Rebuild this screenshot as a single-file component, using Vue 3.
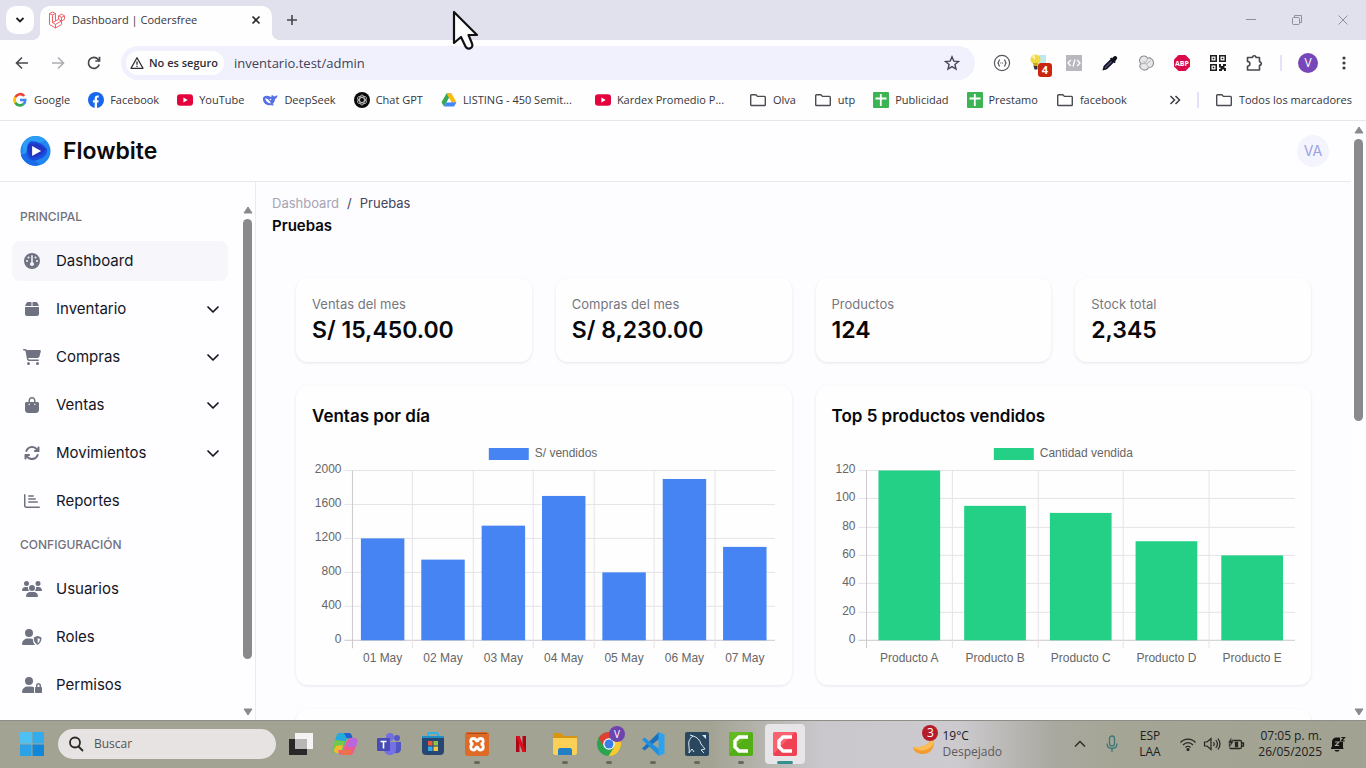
<script setup>
import { computed } from 'vue'

const bookmarks = [
  { name: 'Google', icon: 'google' },
  { name: 'Facebook', icon: 'facebook' },
  { name: 'YouTube', icon: 'youtube' },
  { name: 'DeepSeek', icon: 'deepseek' },
  { name: 'Chat GPT', icon: 'chatgpt' },
  { name: 'LISTING - 450 Semit...', icon: 'drive', long: true },
  { name: 'Kardex Promedio P...', icon: 'youtube', long: true },
  { name: 'Olva', icon: 'folder' },
  { name: 'utp', icon: 'folder' },
  { name: 'Publicidad', icon: 'sheets' },
  { name: 'Prestamo', icon: 'sheets' },
  { name: 'facebook', icon: 'folder' },
]

const icons = {
  gauge: { w: 512, d: 'M0 256a256 256 0 1 1 512 0A256 256 0 1 1 0 256zm320 96c0-26.9-16.5-49.9-40-59.3V88c0-13.3-10.7-24-24-24s-24 10.7-24 24V292.7c-23.5 9.5-40 32.5-40 59.3c0 35.3 28.7 64 64 64s64-28.7 64-64zM144 176a32 32 0 1 0 0-64 32 32 0 1 0 0 64zm-16 80a32 32 0 1 0 -64 0 32 32 0 1 0 64 0zm288 32a32 32 0 1 0 0-64 32 32 0 1 0 0 64zM400 144a32 32 0 1 0 -64 0 32 32 0 1 0 64 0z' },
  box: { w: 448, d: 'M50.7 58.5L0 160H208V32H93.7C75.5 32 58.9 42.3 50.7 58.5zM240 160H448L397.3 58.5C389.1 42.3 372.5 32 354.3 32H240V160zm208 32H0V416c0 35.3 28.7 64 64 64H384c35.3 0 64-28.7 64-64V192z' },
  cart: { w: 576, d: 'M0 24C0 10.7 10.7 0 24 0H69.5c22 0 41.5 12.8 50.6 32h411c26.3 0 45.5 25 38.6 50.4l-41 152.3c-8.5 31.4-37 53.3-69.5 53.3H170.7l5.4 28.5c2.2 11.3 12.1 19.5 23.6 19.5H488c13.3 0 24 10.7 24 24s-10.7 24-24 24H199.7c-34.6 0-64.3-24.6-70.7-58.5L77.4 54.5c-.7-3.8-4-6.5-7.9-6.5H24C10.7 48 0 37.3 0 24zM128 464a48 48 0 1 1 96 0 48 48 0 1 1 -96 0zm336-48a48 48 0 1 1 0 96 48 48 0 1 1 0-96z' },
  bag: { w: 448, d: 'M160 112c0-35.3 28.7-64 64-64s64 28.7 64 64v48H160V112zm-48 48H48c-26.5 0-48 21.5-48 48V416c0 53 43 96 96 96H352c53 0 96-43 96-96V208c0-26.5-21.5-48-48-48H336V112C336 50.1 285.9 0 224 0S112 50.1 112 112v48zm24 48a24 24 0 1 1 0 48 24 24 0 1 1 0-48zm152 24a24 24 0 1 1 48 0 24 24 0 1 1 -48 0z' },
  rotate: { w: 512, d: 'M105.1 202.6c7.7-21.8 20.2-42.3 37.8-59.8c62.5-62.5 163.8-62.5 226.3 0L386.3 160H352c-17.7 0-32 14.3-32 32s14.3 32 32 32H463.9c17.7 0 32-14.3 32-32V80c0-17.7-14.3-32-32-32s-32 14.3-32 32v35.2L414.4 97.6c-87.5-87.5-229.3-87.5-316.8 0C73.2 122 55.6 150.7 44.8 181.4c-5.9 16.7 2.9 34.9 19.5 40.8s34.9-2.9 40.8-19.5zM39 289.3c-5 1.5-9.8 4.2-13.7 8.2c-4 4-6.7 8.8-8.1 14c-.3 1.2-.6 2.5-.8 3.8c-.3 1.7-.4 3.4-.4 5.1V432c0 17.7 14.3 32 32 32s32-14.3 32-32V396.9l17.6 17.5c87.5 87.4 229.3 87.4 316.7 0c24.4-24.4 42.1-53.1 52.9-83.7c5.9-16.7-2.9-34.9-19.5-40.8s-34.9 2.9-40.8 19.5c-7.7 21.8-20.2 42.3-37.8 59.8c-62.5 62.5-163.8 62.5-226.3 0L125.6 352H160c17.7 0 32-14.3 32-32s-14.3-32-32-32H48.4c-1.6 0-3.2 .1-4.8 .3s-3.1 .5-4.6 1z' },
  chart: { w: 512, d: 'M24 32c13.300 0 24 10.700 24 24V408c0 13.300 10.700 24 24 24H488c13.300 0 24 10.700 24 24s-10.700 24-24 24H72c-39.800 0-72-32.200-72-72V56C0 42.700 10.700 32 24 32zM152 72H296a24 24 0 0 1 0 48H152a24 24 0 0 1 0-48zM152 168H360a24 24 0 0 1 0 48H152a24 24 0 0 1 0-48zM152 264H424a24 24 0 0 1 0 48H152a24 24 0 0 1 0-48z' },
  users: { w: 640, d: 'M144 0a80 80 0 1 1 0 160A80 80 0 1 1 144 0zM512 0a80 80 0 1 1 0 160A80 80 0 1 1 512 0zM0 298.700C0 239.800 47.800 192 106.700 192h42.700c15.900 0 31 3.500 44.600 9.700c-1.300 7.200-1.900 14.700-1.900 22.300c0 38.200 16.800 72.500 43.300 96H21.300C9.600 320 0 310.400 0 298.700zM405.300 320c26.600-23.500 43.300-57.800 43.300-96c0-7.600-.7-15-1.900-22.300c13.600-6.300 28.700-9.700 44.600-9.700h42.700C592.200 192 640 239.800 640 298.700c0 11.800-9.600 21.300-21.300 21.300H405.300zM224 224a96 96 0 1 1 192 0 96 96 0 1 1-192 0zM128 485.300C128 411.700 187.700 352 261.300 352H378.700C452.300 352 512 411.700 512 485.300c0 14.700-11.900 26.700-26.700 26.700H154.700c-14.700 0-26.700-11.900-26.700-26.700z' },
  shield: { w: 640, d: 'M224 256A128 128 0 1 0 224 0a128 128 0 1 0 0 256zM178.300 304C79.800 304 0 383.800 0 482.300C0 498.700 13.300 512 29.700 512H418C384 480 352 430 352 345l0-18c-24-15-52-23-82-23H178.300zM509 226c-6-3-13-3-19 0L392 265c-9 3-15 12-15 22c0 79 28 167 113 214c6 4 13 4 19 0c85-47 114-135 114-214c0-10-6-19-15-22L509 226zm-9 60l75 30c-4 60-28 105-75 137V286z' },
  lock: { w: 640, d: 'M224 256A128 128 0 1 0 224 0a128 128 0 1 0 0 256zM178.300 304C79.800 304 0 383.800 0 482.300C0 498.700 13.300 512 29.700 512H392c-5-10-8-20-8-32V352c0-8 1-16 4-23c-31-16-67-25-104-25H178.300zM528 240c17.700 0 32 14.300 32 32v48H496V272c0-17.700 14.300-32 32-32zm-80 32v48c-17.700 0-32 14.300-32 32V480c0 17.700 14.300 32 32 32H608c17.700 0 32-14.300 32-32V352c0-17.700-14.300-32-32-32V272c0-44.200-35.800-80-80-80s-80 35.800-80 80z' },
}

const mainMenu = [
  { name: 'Dashboard', icon: 'gauge', active: true },
  { name: 'Inventario', icon: 'box', group: true },
  { name: 'Compras', icon: 'cart', group: true },
  { name: 'Ventas', icon: 'bag', group: true },
  { name: 'Movimientos', icon: 'rotate', group: true },
  { name: 'Reportes', icon: 'chart' },
]
const configMenu = [
  { name: 'Usuarios', icon: 'users' },
  { name: 'Roles', icon: 'shield' },
  { name: 'Permisos', icon: 'lock' },
]
const sections = [
  { title: 'PRINCIPAL', items: mainMenu },
  { title: 'CONFIGURACIÓN', items: configMenu },
]

const stats = [
  { label: 'Ventas del mes', value: 'S/ 15,450.00' },
  { label: 'Compras del mes', value: 'S/ 8,230.00' },
  { label: 'Productos', value: '124' },
  { label: 'Stock total', value: '2,345' },
]

function buildChart(c) {
  const top = 24.5
  const bottom = 194.5
  const right = 463.5
  const slot = (right - c.left) / c.data.length
  const barW = slot * 0.72
  const y = (v) => bottom - ((bottom - top) * v) / c.max
  const ticks = []
  for (let v = 0; v <= c.max; v += c.step) ticks.push({ v, y: Math.floor(y(v)) + 0.5 })
  const bars = c.data.map(([label, v], i) => ({
    label,
    edge: Math.floor(c.left + slot * i) + 0.5,
    cx: c.left + slot * (i + 0.5),
    x: c.left + slot * (i + 0.5) - barW / 2,
    w: barW,
    y: y(v),
    h: bottom - y(v),
  }))
  return { ...c, top, bottom, right, ticks, bars }
}

const charts = computed(() => [
  buildChart({
    title: 'Ventas por día', legend: 'S/ vendidos', color: '#4684f3', max: 2000, step: 400, left: 40.5, legendX: 177,
    data: [['01 May', 1200], ['02 May', 950], ['03 May', 1350], ['04 May', 1700], ['05 May', 800], ['06 May', 1900], ['07 May', 1100]],
  }),
  buildChart({
    title: 'Top 5 productos vendidos', legend: 'Cantidad vendida', color: '#23d085', max: 120, step: 20, left: 34.5, legendX: 162,
    data: [['Producto A', 120], ['Producto B', 95], ['Producto C', 90], ['Producto D', 70], ['Producto E', 60]],
  }),
])

const apps = [
  { id: 'taskview', name: 'Vista de tareas' },
  { id: 'copilot', name: 'Copilot' },
  { id: 'teams', name: 'Teams' },
  { id: 'store', name: 'Store' },
  { id: 'xampp', name: 'XAMPP', open: true },
  { id: 'netflix', name: 'Netflix' },
  { id: 'files', name: 'Explorador', open: true },
  { id: 'chrome', name: 'Chrome', open: true },
  { id: 'code', name: 'VS Code', open: true },
  { id: 'mysql', name: 'Workbench', open: true },
  { id: 'camtasia', name: 'Camtasia', open: true },
  { id: 'recorder', name: 'Grabadora', open: true, active: true },
]
</script>

<template>
  <div class="desktop">
    <header class="tabstrip">
      <button class="tab-search" aria-label="Buscar pestañas">
        <svg width="12" height="12" viewBox="0 0 12 12"><path d="M2.500 4l3.500 3.500L9.500 4" fill="none" stroke="#1f1f24" stroke-width="1.800" /></svg>
      </button>
      <div class="tab">
        <svg width="18" height="18" viewBox="0 0 18 18" fill="none" stroke="#f0626a" stroke-width="1" stroke-linejoin="round">
          <path d="M1.500 2.500l3-1.500 3 1.500v7.500l3-1.700V4.800l3-1.600 3 1.600v3.500l-3 1.700v3.500l-6 3.500-6-3.500z" />
          <path d="M1.500 2.500l3 1.600 3-1.600M4.500 4.100v7.500l3-1.600M4.500 11.600l3 1.800 6-3.400-3-1.700M7.500 13.400V17M10.500 4.800l3 1.600 3-1.600M13.500 6.400V10" />
        </svg>
        <span class="tab-title">Dashboard | Codersfree</span>
        <button class="tab-close" aria-label="Cerrar pestaña">
          <svg width="10" height="10" viewBox="0 0 10 10"><path d="M1.500 1.500l7 7M8.500 1.500l-7 7" stroke="#27272c" stroke-width="1.600" /></svg>
        </button>
      </div>
      <button class="tab-new" aria-label="Nueva pestaña">
        <svg width="12" height="12" viewBox="0 0 12 12"><path d="M6 1v10M1 6h10" stroke="#45454c" stroke-width="1.600" /></svg>
      </button>
      <div class="window-buttons">
        <button aria-label="Minimizar"><svg width="12" height="12" viewBox="0 0 12 12"><path d="M1 5.500h10" stroke="#8f909b" /></svg></button>
        <button aria-label="Restaurar"><svg width="12" height="12" viewBox="0 0 12 12" fill="none" stroke="#8f909b"><rect x="1.500" y="3.500" width="7" height="7" rx="1" /><path d="M3.500 3.500v-2h7v7h-2" /></svg></button>
        <button aria-label="Cerrar"><svg width="12" height="12" viewBox="0 0 12 12"><path d="M1.500 1.500l9 9M10.500 1.500l-9 9" stroke="#8f909b" /></svg></button>
      </div>
    </header>

    <div class="toolbar">
      <button class="tool" aria-label="Atrás"><svg width="16" height="16" viewBox="0 0 16 16" fill="none" stroke="#47474d" stroke-width="1.600"><path d="M14 8H3M8 2.500L2.500 8 8 13.500" /></svg></button>
      <button class="tool" aria-label="Adelante"><svg width="16" height="16" viewBox="0 0 16 16" fill="none" stroke="#adadb3" stroke-width="1.600"><path d="M2 8h11M8 2.500L13.500 8 8 13.500" /></svg></button>
      <button class="tool" aria-label="Recargar"><svg width="16" height="16" viewBox="0 0 16 16" fill="none" stroke="#47474d" stroke-width="1.700"><path d="M13.200 9.500A5.500 5.500 0 1 1 12 4.200L13.500 6" /><path d="M13.500 1.800V6H9.300" /></svg></button>
      <div class="omnibox">
        <button class="chip">
          <svg width="14" height="14" viewBox="0 0 14 14" fill="none" stroke="#2d2d33" stroke-width="1.300"><path d="M7 1.800L13 12.300H1z" stroke-linejoin="round" /><path d="M7 5.500v3.300M7 9.800v1.200" /></svg>
          No es seguro
        </button>
        <input class="url" aria-label="Dirección" value="inventario.test/admin" />
        <button class="star" aria-label="Añadir a marcadores"><svg width="16" height="16" viewBox="0 0 16 16"><path d="M8 1.800l1.800 4.300 4.700.4-3.600 3 1.100 4.600L8 11.600l-4 2.500 1.100-4.600-3.600-3 4.700-.4z" fill="none" stroke="#45465a" stroke-width="1.400" /></svg></button>
      </div>
      <button class="tool" aria-label="JSON"><svg width="18" height="18" viewBox="0 0 18 18" fill="none" stroke="#58585e" stroke-width="1.200"><circle cx="9" cy="9" r="7.600" /><path d="M7 5.800c-1.800 0-.8 2.400-2 3.200 1.200.8.200 3.200 2 3.200M11 5.800c1.800 0 .8 2.400 2 3.200-1.200.8-.2 3.200-2 3.200" /><path d="M7.200 9h3.800" stroke-dasharray="1 .8" /></svg></button>
      <button class="tool bulb" aria-label="Wappalyzer">
        <svg width="18" height="18" viewBox="0 0 18 18"><path d="M10 1h7v8h-7z" fill="#bfe8ee" /><circle cx="6.500" cy="5.500" r="5" fill="#f1d943" /><path d="M3 3a4 4 0 0 1 3-2v5z" fill="#fff59c" /><path d="M4 9h5l-.5 3h-4z" fill="#c6a51c" /><path d="M4.500 12h4v3.500h-3z" fill="#2f333c" /></svg>
        <span class="badge">4</span>
      </button>
      <button class="tool" aria-label="Código"><svg width="16" height="16" viewBox="0 0 16 16"><rect width="16" height="16" fill="#b9b8c1" /><path d="M4.800 5L2 8l2.800 3M11.200 5L14 8l-2.800 3M9 4.500l-2 7" fill="none" stroke="#fff" stroke-width="1.300" /></svg></button>
      <button class="tool" aria-label="Cuentagotas"><svg width="16" height="16" viewBox="0 0 16 16"><path d="M1.500 14.500l.8-3L9 4.800 11.200 7 4.500 13.700z" fill="#46477f" stroke="#101018" stroke-width="1.500" /><path d="M8 3.500l1.200-1 1 .8C11 2 12.500.5 14 1.200c2 1.200 1.200 3-.9 4.800l.6 1-1.200 1.200z" fill="#101018" /></svg></button>
      <button class="tool" aria-label="Filtro"><svg width="16" height="16" viewBox="0 0 16 16" stroke-linejoin="round"><path d="M2 3.500C3 .500 8 0 9.500 3c3-.8 6 1.500 6 4.800 0 3.500-2.800 5-5 4.700-1 3-5.500 3.500-7.500 1C1.200 11.500 2 9.500 3 8.500 1.500 7.500 1.200 5.500 2 3.500z" fill="#e7e7e9" stroke="#929297" stroke-width="1.100" /><path d="M3 8.500c2 .8 5.500 0 6.500-5.500M3 8.500c3-1 6.500.5 7.500 4M5.500 6l3 3 4-3.500" fill="none" stroke="#b5b5b9" /></svg></button>
      <button class="tool" aria-label="AdBlock Plus"><svg width="18" height="18" viewBox="0 0 18 18"><path d="M5.500 1h7L17 5.500v7L12.500 17h-7L1 12.500v-7z" fill="#d90b4b" /><text x="9" y="11.700" font-size="7" font-weight="700" text-anchor="middle" fill="#fff">ABP</text></svg></button>
      <button class="tool" aria-label="Código QR"><svg width="16" height="16" viewBox="0 0 16 16" fill="#1d1d1f"><path fill-rule="evenodd" d="M0 0h7v7H0zM1.500 1.500v4h4v-4zM9 0h7v7H9zM10.500 1.500v4h4v-4zM0 9h7v7H0zM1.500 10.500v4h4v-4z" /><path d="M2.700 2.700h1.600v1.600H2.700zM11.700 2.700h1.600v1.600h-1.600zM2.700 11.700h1.600v1.600H2.700zM9 9h2v2h2V9h3v2h-1.500v2H16v3h-2v-1.500h-2V16H9v-2h1.500v-1.500H9z" /></svg></button>
      <button class="tool" aria-label="Extensiones"><svg width="18" height="18" viewBox="0 0 18 18" fill="none" stroke="#47474d" stroke-width="1.600" stroke-linejoin="round"><path d="M2.500 3.500h5c0-2.300 3.500-2.300 3.500 0h3.500v4.200c2.300 0 2.300 3.700 0 3.700V16h-12v-3.800c3.200 0 3.200-4.700 0-4.700z" /></svg></button>
      <i class="divider"></i>
      <button class="tool" aria-label="Perfil"><span class="profile">V</span></button>
      <button class="tool" aria-label="Menú"><svg width="16" height="16" viewBox="0 0 16 16" fill="#3c3c42"><circle cx="8" cy="3" r="1.600" /><circle cx="8" cy="8" r="1.600" /><circle cx="8" cy="13" r="1.600" /></svg></button>
    </div>

    <nav class="bookmarks" aria-label="Marcadores">
      <a v-for="b in bookmarks" :key="b.name" href="#" class="bookmark" :class="{ long: b.long }">
        <svg v-if="b.icon === 'google'" width="16" height="16" viewBox="0 0 16 16" fill="none" stroke-width="2.600"><path d="M12.200 4A5.400 5.400 0 0 0 3.300 5.200" stroke="#ea4335" /><path d="M3.300 5.200a5.400 5.400 0 0 0 0 5.600" stroke="#fbbc05" /><path d="M3.300 10.800A5.400 5.400 0 0 0 11.500 12" stroke="#34a853" /><path d="M11.500 12A5 5 0 0 0 13.200 8H8" stroke="#4285f4" /></svg>
        <svg v-else-if="b.icon === 'facebook'" width="16" height="16" viewBox="0 0 16 16"><circle cx="8" cy="8" r="8" fill="#1768ee" /><path d="M6.700 16v-5.400H4.900V8.200h1.800V6.700c0-2.500 1.500-3.500 4-3.100v2c-1.300-.1-1.700.3-1.700 1.200v1.400h1.700l-.4 2.400H9V16z" fill="#fff" /></svg>
        <svg v-else-if="b.icon === 'youtube'" width="16" height="16" viewBox="0 0 16 16"><rect y="2.300" width="16" height="11.400" rx="3" fill="#e4043d" /><path d="M6.400 5.600L10.700 8l-4.300 2.400z" fill="#fff" /></svg>
        <svg v-else-if="b.icon === 'deepseek'" width="16" height="16" viewBox="0 0 16 16"><path d="M1 6c1-2.500 4-3 7-1.500C9 5.500 10 5 9.500 3c1.500.300 2 1.500 3 1.500.800-.300 1.500-1 3-1-.3 2-1 3-2.500 3.500-.2 2.500-1 4-2.500 5l1.500 1c-1.500.800-2.500.5-3.500 0C4 14 .500 10.500 1 6z" fill="#5570e6" /><path d="M3 6.500c2-.5 4 1 6 5-3-.2-5-2-6-5z" fill="#fff" /><circle cx="8.500" cy="7.500" r=".8" fill="#fff" /></svg>
        <svg v-else-if="b.icon === 'chatgpt'" width="16" height="16" viewBox="0 0 16 16" fill="none" stroke="#d8d8d8" stroke-width=".8"><circle cx="8" cy="8" r="8" fill="#09090a" stroke="none" /><ellipse cx="8" cy="8" rx="2.400" ry="5" /><ellipse cx="8" cy="8" rx="2.400" ry="5" transform="rotate(60 8 8)" /><ellipse cx="8" cy="8" rx="2.400" ry="5" transform="rotate(120 8 8)" /></svg>
        <svg v-else-if="b.icon === 'drive'" width="16" height="16" viewBox="0 0 16 16"><path d="M5.500 1.500h5L8 6l-5 8.500L.5 10.300z" fill="#35a853" /><path d="M5.500 1.500h5l5 8.800h-5z" fill="#fbbb0d" /><path d="M5.500 10.300h10L13 14.500H3z" fill="#4386f5" /><path d="M8 6.500l2.200 3.800H5.800z" fill="#fff" /></svg>
        <svg v-else-if="b.icon === 'sheets'" width="16" height="16" viewBox="0 0 16 16"><rect width="16" height="16" rx="1" fill="#3cb454" /><path d="M7.800 2v12M2.500 6.500h11" stroke="#fff" stroke-width="1.800" /></svg>
        <svg v-else width="18" height="16" viewBox="0 0 18 16"><path d="M1.700 3.500c0-.5.300-.8.800-.8h4.300l1.700 1.700h7c.500 0 .8.300.8.800v7.500c0 .5-.3.800-.8.800h-13c-.5 0-.8-.3-.8-.8z" fill="none" stroke="#4b4b52" stroke-width="1.400" /></svg>
        <span>{{ b.name }}</span>
      </a>
      <button class="more" aria-label="Más marcadores"><svg width="12" height="12" viewBox="0 0 12 12"><path d="M1.500 2L5.500 6l-4 4M6.500 2l4 4-4 4" fill="none" stroke="#3c3c42" stroke-width="1.500" /></svg></button>
      <i class="divider wide"></i>
      <a href="#" class="bookmark">
        <svg width="18" height="16" viewBox="0 0 18 16"><path d="M1.700 3.500c0-.5.300-.8.800-.8h4.300l1.700 1.700h7c.500 0 .8.300.8.800v7.500c0 .5-.3.800-.8.800h-13c-.5 0-.8-.3-.8-.8z" fill="none" stroke="#4b4b52" stroke-width="1.400" /></svg>
        <span>Todos los marcadores</span>
      </a>
    </nav>

    <div class="viewport">
      <div class="page">
        <header class="topbar">
          <a href="#" class="brand">
            <svg width="31" height="32" viewBox="0 0 32 32">
              <circle cx="16" cy="16" r="15.500" fill="#2087f2" />
              <path d="M3 8A15.500 15.500 0 0 1 27 5l-8 3-9 3-7 9z" fill="#2b9df6" />
              <path d="M1 20c3 9 12 13 20 10l-8-5-5-7z" fill="#1a6bea" />
              <path d="M11 6c5-1 13 2 17 8 1 6-5 10-12 12-5 0-9-3-9-8 0-5 0-9 4-12z" fill="#1b4ddd" />
              <path d="M9 9c7-2 13 0 17 5-1 5-7 8-14 9-3-3-5-8-3-14z" fill="#2136c5" />
              <path d="M12.500 10.800L21.800 16l-9.300 5.200z" fill="#fff" />
            </svg>
            <span>Flowbite</span>
          </a>
          <button class="avatar" aria-label="Cuenta">VA</button>
        </header>
        <div class="body">
          <aside class="sidebar">
            <nav class="menu" aria-label="Principal">
              <template v-for="s in sections" :key="s.title">
                <h2 class="section">{{ s.title }}</h2>
                <component :is="item.group ? 'button' : 'a'" v-for="item in s.items" :key="item.name" :href="item.group ? undefined : '#'" class="item" :class="{ active: item.active }">
                  <span class="item-icon"><svg height="16" :viewBox="`0 0 ${icons[item.icon].w} 512`"><path :d="icons[item.icon].d" fill="#6f7280" fill-rule="evenodd" /></svg></span>
                  <span class="item-name">{{ item.name }}</span>
                  <svg v-if="item.group" width="14" height="14" viewBox="0 0 14 14"><path d="M2 5l5 5 5-5" fill="none" stroke="#14161f" stroke-width="1.700" stroke-linecap="round" stroke-linejoin="round" /></svg>
                </component>
              </template>
            </nav>
            <div class="scrollbar">
              <svg width="10" height="8" viewBox="0 0 10 8"><path d="M5 1l4 6H1z" fill="#8a898c" stroke="#8a898c" stroke-linejoin="round" /></svg>
              <div class="track"><div class="thumb side"></div></div>
              <svg width="10" height="8" viewBox="0 0 10 8"><path d="M1 1h8L5 7z" fill="#8a898c" stroke="#8a898c" stroke-linejoin="round" /></svg>
            </div>
          </aside>
          <main class="main">
            <nav class="crumbs" aria-label="Ruta"><a href="#">Dashboard</a><span>/</span><span class="current">Pruebas</span></nav>
            <h1>Pruebas</h1>
            <div class="content">
              <section class="stats">
                <article v-for="s in stats" :key="s.label" class="card">
                  <p class="label">{{ s.label }}</p>
                  <p class="value">{{ s.value }}</p>
                </article>
              </section>
              <section class="charts">
                <article v-for="c in charts" :key="c.title" class="card">
                  <h2 class="chart-title">{{ c.title }}</h2>
                  <svg class="chart" viewBox="0 0 464 223" role="img" :aria-label="c.title">
                    <rect :x="c.legendX" y="2" width="40" height="12" :fill="c.color" />
                    <text :x="c.legendX + 46" y="11">{{ c.legend }}</text>
                    <g v-for="t in c.ticks" :key="t.v">
                      <line :x1="c.left - 8" :x2="c.right" :y1="t.y" :y2="t.y" :class="{ axis: t.v === 0 }" />
                      <text :x="c.left - 11" :y="t.y + 2.5" text-anchor="end">{{ t.v }}</text>
                    </g>
                    <line v-for="(b, i) in c.bars" :key="'g' + b.label" :x1="b.edge" :x2="b.edge" :y1="c.top" :y2="c.bottom + 8" :class="{ axis: i === 0 }" />
                    <g v-for="b in c.bars" :key="b.label">
                      <rect :x="b.x" :y="b.y" :width="b.w" :height="b.h" :fill="c.color" />
                      <text :x="b.cx" y="216" text-anchor="middle">{{ b.label }}</text>
                    </g>
                  </svg>
                </article>
              </section>
              <section class="card next"></section>
            </div>
          </main>
        </div>
      </div>
      <div class="scrollbar">
        <svg width="10" height="8" viewBox="0 0 10 8"><path d="M5 1l4 6H1z" fill="#8a898c" stroke="#8a898c" stroke-linejoin="round" /></svg>
        <div class="track"><div class="thumb page-thumb"></div></div>
        <svg width="10" height="8" viewBox="0 0 10 8"><path d="M1 1h8L5 7z" fill="#8a898c" stroke="#8a898c" stroke-linejoin="round" /></svg>
      </div>
    </div>

    <footer class="taskbar">
      <button class="start" aria-label="Inicio">
        <svg width="24" height="24" viewBox="0 0 24 24"><path d="M0 0h11.500v11.500H0z" fill="#4cc1f2" /><path d="M12.500 0H24v11.500H12.500z" fill="#33aceb" /><path d="M0 12.500h11.500V24H0z" fill="#2ba2e6" /><path d="M12.500 12.500H24V24H12.500z" fill="#1286d8" /></svg>
      </button>
      <label class="search">
        <svg width="16" height="16" viewBox="0 0 16 16" fill="none" stroke="#29292b" stroke-width="1.800"><circle cx="7" cy="6.500" r="5" /><path d="M10.500 10.500L15 15" /></svg>
        <input type="search" placeholder="Buscar" aria-label="Buscar" />
      </label>
      <div class="apps">
        <button v-for="a in apps" :key="a.id" class="app" :class="{ active: a.active, open: a.open }" :aria-label="a.name">
          <svg v-if="a.id === 'taskview'" width="24" height="24" viewBox="0 0 24 24"><path d="M0 7h18v16H0z" fill="#2a2829" /><path d="M6 1h18v16H6z" fill="#f5f3f4" /><path d="M6 7h12v10H6z" fill="#b9b6b8" /></svg>
          <svg v-else-if="a.id === 'copilot'" width="26" height="24" viewBox="0 0 26 24"><path d="M8 1h8c2 0 3 1 3.500 3l1 3h-6l-4 11c-.6 2-2 3-4 3H4c-3 0-4-2-3-5L4 5c.7-2.500 2-4 4-4z" fill="#24aadb" /><path d="M3 8l-2 8c-1 3 0 5 3 5h3c2 0 3-2 4-5L13 9z" fill="#72c947" /><path d="M4 14l-2 4c0 2 1 3 3 3 3 0 4-1 5-4l1-4z" fill="#f6ba2b" /><path d="M12 1h5c2 0 3 2 3.500 5h-6z" fill="#2362cf" /><path d="M18 23h-8c-2 0-3-1-3.500-3l-.5-2h5l4-9c.6-1.600 2-3 4-3h3c3 0 4 2 3 5l-3 8c-.7 2.500-2 4-4 4z" fill="#ec5c8e" /><path d="M21 6c4 0 5 2 4 5l-1 4h-9l2-6c1-2 2-3 4-3z" fill="#b868de" /><path d="M7 18h13l-2 5h-8z" fill="#f0704d" /></svg>
          <svg v-else-if="a.id === 'teams'" width="24" height="24" viewBox="0 0 24 24"><circle cx="13" cy="5" r="4" fill="#746fe0" /><circle cx="20" cy="6" r="3" fill="#5459c7" /><path d="M16 10h8v7c0 3-3 5-6 4z" fill="#5056c2" /><path d="M7 10h12v7c0 4-3 6-6 6s-6-2-6-6z" fill="#7571e4" /><rect y="6" width="13" height="13" rx="1" fill="#484db6" /><path d="M3.500 9.500h6M6.500 9.500v7" stroke="#fff" stroke-width="1.600" /></svg>
          <svg v-else-if="a.id === 'store'" width="24" height="24" viewBox="0 0 24 24"><path d="M7 5V2.500C7 1.500 8 1 9 1h6c1 0 2 .5 2 1.500V5" fill="none" stroke="#2bb5e5" stroke-width="2" /><path d="M1 5h22v14a4 4 0 0 1-4 4H5a4 4 0 0 1-4-4z" fill="#264673" /><path d="M1 4h22v2H1z" fill="#208fc5" /><path d="M7 9h4.500v4.500H7z" fill="#ec5a38" /><path d="M12.500 9H17v4.500h-4.500z" fill="#87c642" /><path d="M7 14.500h4.500V19H7z" fill="#34a9e5" /><path d="M12.500 14.500H17V19h-4.500z" fill="#f8c43b" /></svg>
          <svg v-else-if="a.id === 'xampp'" width="24" height="24" viewBox="0 0 24 24"><rect width="24" height="24" rx="3" fill="#de6a26" /><path d="M2 1.500h20" stroke="#a14d20" /><path d="M8.500 12C4.800 12 4.800 6.500 8.500 6.500S9.500 9 12 9s0-2.500 3.500-2.500 3.700 5.500 0 5.500c3.700 0 3.700 6 0 6s-1-3-3.500-3 0 3-3.500 3-3.700-6 0-6z" fill="none" stroke="#fff" stroke-width="2.800" /></svg>
          <svg v-else-if="a.id === 'netflix'" width="12" height="18" viewBox="0 0 12 18"><path d="M1 1h3.500v16H1zM7.500 1H11v16H7.500z" fill="#ac0717" /><path d="M1 1h3.500L11 17H7.500z" fill="#e40c1c" /></svg>
          <svg v-else-if="a.id === 'files'" width="26" height="24" viewBox="0 0 26 24"><path d="M1 2c0-1 1-1 1-1h7l3 3h12c1 0 1 1 1 1v5H1z" fill="#d89413" /><path d="M1 6h24v15c0 1-1 2-2 2H3c-1 0-2-1-2-2z" fill="#fad056" /><path d="M6 18c0-1 1-2 2-2h10c1 0 2 1 2 2v5H6z" fill="#237fc5" /></svg>
          <svg v-else-if="a.id === 'chrome'" width="26" height="26" viewBox="0 0 26 26"><circle cx="13" cy="13" r="12" fill="#2aa44e" /><path d="M2.600 7A12 12 0 0 1 23.400 7H13L8 16z" fill="#de4034" /><path d="M23.400 7A12 12 0 0 1 12.500 25L18.500 15.500 15 7z" fill="#fac932" /><circle cx="13" cy="13" r="5.800" fill="#fff" /><circle cx="13" cy="13" r="4.500" fill="#3a7fe8" /></svg>
          <svg v-else-if="a.id === 'code'" width="24" height="24" viewBox="0 0 24 24"><path d="M18 0v7L3.500 18.500 1 16.500z" fill="#1a72ba" /><path d="M3.500 5.500L18 17v7L1 7.500z" fill="#2490dd" /><path d="M17.500 0L23.500 2.500v19L17.500 24z" fill="#2ea2ec" /></svg>
          <svg v-else-if="a.id === 'mysql'" width="24" height="24" viewBox="0 0 24 24"><rect width="24" height="24" rx="2" fill="#29485f" /><path d="M4 21c1-4-1-8 0-12 1-2 2-4 4-5 4 1 7 4 8 8 1 2 3 3 4 5l-4 1 3 3M8 4L5 3M4 21l3-4 2 3" fill="none" stroke="#dce7ef" stroke-width="1" /><path d="M17 3h4v4z" fill="#dce7ef" /></svg>
          <svg v-else width="24" height="24" viewBox="0 0 24 24"><rect width="24" height="24" rx="2" :fill="a.id === 'camtasia' ? '#54ae16' : '#ef4355'" /><path d="M0 2c0-1 1-2 2-2h20L0 22z" :fill="a.id === 'camtasia' ? '#63b91f' : '#fb6270'" /><path d="M19 5H10L6 9v6l4 4h9" fill="none" stroke="#fff" stroke-width="3.400" /></svg>
          <span v-if="a.id === 'chrome'" class="user">V</span>
        </button>
      </div>
      <a href="#" class="weather">
        <span class="moon">
          <svg width="24" height="24" viewBox="0 0 24 24"><path d="M22 8c1 8-4 14-11 14C6 22 2 20 1 15c7 1 14-1 17-6z" fill="#f39b30" /><path d="M22 8c1 5-4 9-9 10-5 1-9 0-12-3 7 1 14-1 17-6z" fill="#fabe55" /></svg>
          <span class="count">3</span>
        </span>
        <span>19°C<br /><span class="dim">Despejado</span></span>
      </a>
      <div class="tray">
        <button class="tray-btn" aria-label="Iconos ocultos"><svg width="12" height="12" viewBox="0 0 12 12"><path d="M1 8.500l5-5 5 5" fill="none" stroke="#2c2c29" stroke-width="1.500" /></svg></button>
        <button class="tray-btn" aria-label="Micrófono"><svg width="14" height="18" viewBox="0 0 14 18" fill="none" stroke="#3d7777" stroke-width="1.300"><rect x="4.500" y="1" width="5" height="10" rx="2.500" /><path d="M2 8.500c0 3 2 5 5 5s5-2 5-5M7 13.500V17" /></svg></button>
        <button class="lang">ESP<br />LAA</button>
        <button class="status" aria-label="Red, volumen y batería">
          <svg width="18" height="16" viewBox="0 0 18 16" fill="none" stroke="#252522" stroke-width="1.200"><path d="M1.500 6.500c4-4.500 11-4.500 15 0M4 9c3-3.200 7-3.200 10 0M6.500 11.500c1.500-1.700 3.500-1.700 5 0" /><circle cx="9" cy="13.500" r="1" fill="#252522" /></svg>
          <svg width="18" height="16" viewBox="0 0 18 16" fill="none" stroke="#252522" stroke-width="1.200"><path d="M1.500 6v4h2.500l4 3.500v-11L4 6zM10.500 6c1 1.300 1 2.700 0 4M12.800 4c2 2.500 2 5.500 0 8M15 2.500c2.500 3.500 2.500 7.500 0 11" /></svg>
          <svg width="18" height="16" viewBox="0 0 18 16" fill="none" stroke="#252522" stroke-width="1.300"><rect x="2.500" y="4.500" width="12" height="8" rx="1.500" /><path d="M15 7h1.500v3H15" /><path d="M8.500 6.500h2v4h-2z" fill="#252522" /><path d="M4.500 1L1 7h2.500L2.500 12 7 5H4.500z" fill="#252522" stroke="#a1a292" stroke-width=".5" /></svg>
        </button>
        <button class="clock">07:05 p. m.<br />26/05/2025</button>
        <button class="bell" aria-label="Notificaciones"><svg width="16" height="16" viewBox="0 0 16 16"><path d="M2 6c0-3 2-4.500 4.500-4.500H10V6h3v6h.5v1H1v-1l1-1.500z" fill="#141413" /><path d="M4.500 14h5c-.5 2-4.500 2-5 0z" fill="#141413" /><path d="M11.300 1.500h3.200l-3.200 3.500h3.400" fill="none" stroke="#141413" stroke-width="1.200" /><path d="M5 6h4L5.500 9.500H9" fill="none" stroke="#a4a595" stroke-width="1.100" /></svg></button>
      </div>
    </footer>

    <svg class="cursor" width="30" height="44" viewBox="0 0 30 44"><path d="M3 3v31l7-6 4.500 9.500c1 2 3 2.500 4.800 1.700s2.700-2.500 1.700-4.700L17.500 26H26z" fill="#fdfdfd" stroke="#111114" stroke-width="2.200" stroke-linejoin="round" /></svg>
  </div>
</template>

<style>
body { margin: 0; overflow: hidden; }
</style>

<style scoped>
* { box-sizing: border-box; }
svg { display: block; flex: none; }
button { padding: 0; border: 0; background: none; font: inherit; color: inherit; }
input { border: 0; outline: 0; padding: 0; background: none; font: inherit; min-width: 0; }
a { color: inherit; text-decoration: none; }
h1, h2, p { margin: 0; }

.desktop { position: relative; display: flex; flex-direction: column; height: 100vh; overflow: hidden; font-family: "Open Sans", "Noto Sans", sans-serif; font-size: 12px; line-height: 16px; color: #35353b; background: #fefdff; }

.tabstrip { display: flex; align-items: flex-start; height: 40px; padding-left: 6px; background: #e0e1ec; font-size: 11px; flex: none; }
.tab-search { display: grid; place-items: center; width: 28px; height: 28px; margin-top: 6px; border-radius: 10px; background: #fefeff; }
.tab { position: relative; display: flex; align-items: center; width: 232px; height: 34px; margin: 6px 0 0 6px; padding: 0 8px 6px; border-radius: 10px 10px 0 0; background: #fefeff; }
.tab::before, .tab::after { content: ""; position: absolute; bottom: 0; width: 8px; height: 8px; }
.tab::before { left: -8px; background: radial-gradient(circle at 0 0, #e0e1ec 8px, #fefeff 8px); }
.tab::after { right: -8px; background: radial-gradient(circle at 100% 0, #e0e1ec 8px, #fefeff 8px); }
.tab-title { flex: 1; margin-left: 6px; white-space: nowrap; }
.tab-close { display: grid; place-items: center; width: 16px; height: 16px; }
.tab-new { display: grid; place-items: center; width: 28px; height: 28px; margin: 6px 0 0 6px; }
.window-buttons { display: flex; margin-left: auto; }
.window-buttons button { display: grid; place-items: center; width: 46px; height: 40px; }

.toolbar { display: flex; align-items: center; height: 46px; padding: 0 4px; background: #fefeff; flex: none; }
.tool { position: relative; display: grid; place-items: center; width: 36px; height: 32px; flex: none; }
.omnibox { display: flex; align-items: center; flex: 1; height: 34px; margin: 0 9px; padding: 0 7px 0 5px; border-radius: 17px; background: #f0f1fd; }
.chip { display: flex; align-items: center; gap: 5px; height: 24px; padding: 0 6px 0 4px; border-radius: 12px; background: #fefeff; color: #2d2d33; font-size: 11px; font-weight: 600; white-space: nowrap; }
.url { flex: 1; margin-left: 10px; font-size: 13px; color: #414158; }
.star { display: grid; place-items: center; width: 32px; height: 32px; }
.badge { position: absolute; left: 18px; top: 16px; width: 14px; height: 14px; border-radius: 3px; background: #c9260d; color: #fff; font-size: 11px; line-height: 14px; font-weight: 700; text-align: center; }
.divider { width: 2px; height: 16px; margin: 0 8px; background: #e3e2f8; flex: none; }
.divider.wide { margin-right: 16px; }
.profile { width: 20px; height: 20px; border-radius: 50%; background: #7746b9; color: #fff; line-height: 20px; text-align: center; }

.bookmarks { display: flex; align-items: center; height: 35px; padding: 0 14px 7px 12px; border-bottom: 1px solid #e7e6ec; background: #fefeff; font-size: 11px; white-space: nowrap; flex: none; }
.bookmark { display: flex; align-items: center; gap: 6px; margin-right: 18px; }
.bookmark:last-child { margin-right: 0; }
.bookmark.long span { width: 114px; }
.more { display: grid; place-items: center; width: 28px; height: 24px; margin-left: auto; }

.viewport { display: flex; flex: 1; min-height: 0; font-family: Inter, "Noto Sans", sans-serif; }
.page { display: flex; flex-direction: column; flex: 1; min-width: 0; }
.scrollbar { display: flex; flex-direction: column; align-items: center; width: 15px; padding: 5px 0 4px; flex: none; }
.track { flex: 1; min-height: 0; width: 9px; padding: 5px 0; }
.thumb { width: 9px; border-radius: 5px; background: #8a898c; }
.side { height: 91%; }
.page-thumb { height: 50%; }

.topbar { display: flex; align-items: center; justify-content: space-between; height: 61px; padding: 0 22px 0 20px; border-bottom: 1px solid #e9e7ee; flex: none; }
.brand { display: flex; align-items: center; gap: 12px; color: #0a0a0d; font-size: 23px; line-height: 32px; font-weight: 600; }
.avatar { width: 32px; height: 32px; border-radius: 50%; background: #f4f4fe; color: #9aa1e0; font-size: 14px; }

.body { display: flex; flex: 1; min-height: 0; }
.sidebar { display: flex; width: 256px; padding-top: 19px; border-right: 1px solid #eceaf0; flex: none; }
.menu { display: flex; flex-direction: column; gap: 8px; flex: 1; padding: 0 12px; overflow: hidden; }
.section { padding: 8px; font-size: 12px; line-height: 16px; font-weight: 500; color: #72727c; }
.item { display: flex; align-items: center; gap: 12px; padding: 8px; border-radius: 8px; font-size: 15px; line-height: 24px; text-align: left; color: #14161f; flex: none; }
.item.active { background: #f6f6fb; }
.item-icon { display: flex; justify-content: center; width: 24px; }
.item-name { flex: 1; }

.main { flex: 1; min-width: 0; padding: 11px 16px 0; background: #fdfcff; overflow: hidden; }
.crumbs { display: flex; gap: 8px; font-size: 13px; line-height: 20px; color: #45455a; }
.crumbs a { color: #a6a5b2; }
.main h1 { margin-top: 3px; font-size: 15px; line-height: 20px; font-weight: 600; color: #08080b; }
.content { display: flex; flex-direction: column; gap: 24px; padding: 42px 24px 0; }
.stats { display: grid; grid-template-columns: repeat(4, 1fr); gap: 24px; }
.charts { display: grid; grid-template-columns: repeat(2, 1fr); gap: 24px; }
.card { padding: 16px; border-radius: 12px; background: #fefefe; box-shadow: 0 1px 3px rgba(30, 20, 60, 0.1); }
.label { font-size: 13px; line-height: 20px; color: #77777f; }
.value { font-size: 23px; line-height: 32px; font-weight: 600; color: #08080b; }
.chart-title { margin-bottom: 16px; font-size: 17px; line-height: 28px; font-weight: 600; color: #08080b; }
.chart { width: 100%; height: auto; font-family: "Liberation Sans", Arial, sans-serif; font-size: 12px; }
.chart text { fill: #666; }
.chart line { stroke: #e6e3e9; stroke-width: 1; }
.chart line.axis { stroke: #cbc8ce; }
.next { height: 200px; }

.taskbar { display: flex; align-items: center; height: 48px; padding: 0 20px 2px 10px; border-top: 1px solid #8e8e89; background: linear-gradient(90deg, #a3a394 0, #a3a394 52%, #c9c7cb 60%, #cdcbcf 70%, #a9a9a0 77%, #a4a594 82%, #a1a292 100%); color: #20201f; flex: none; }
.start { display: grid; place-items: center; width: 44px; height: 44px; }
.search { display: flex; align-items: center; gap: 10px; width: 218px; height: 30px; margin-left: 4px; padding: 0 10px; border-radius: 15px; background: #e6e3e2; }
.search input { flex: 1; font-size: 12px; }
.search input::placeholder { color: #555351; opacity: 1; }
.apps { display: flex; gap: 4px; margin-left: 5px; }
.app { position: relative; display: grid; place-items: center; width: 40px; height: 40px; border-radius: 4px; }
.app.active { background: #e8e5e9; }
.app.open::after { content: ""; position: absolute; bottom: 0; width: 6px; height: 3px; border-radius: 2px; background: #68685f; }
.app.active::after { width: 16px; background: #33908c; }
.user { position: absolute; left: 20px; top: 2px; width: 16px; height: 16px; border-radius: 50%; background: #6f43ae; color: #fff; font-size: 10px; line-height: 16px; }
.weather { display: flex; align-items: center; gap: 6px; margin-left: auto; }
.moon { position: relative; }
.count { position: absolute; left: 10px; top: -7px; width: 16px; height: 16px; border-radius: 50%; background: #b51d2b; color: #fff; text-align: center; line-height: 16px; }
.dim { color: #5c5a5d; }
.tray { display: flex; align-items: center; margin-left: 62px; }
.tray-btn { display: grid; place-items: center; width: 32px; height: 40px; }
.lang { width: 44px; text-align: center; }
.status { display: flex; gap: 6px; margin-left: 7px; }
.clock { width: 77px; margin-right: 8px; text-align: right; white-space: nowrap; }

.cursor { position: absolute; left: 451px; top: 9px; }
</style>
